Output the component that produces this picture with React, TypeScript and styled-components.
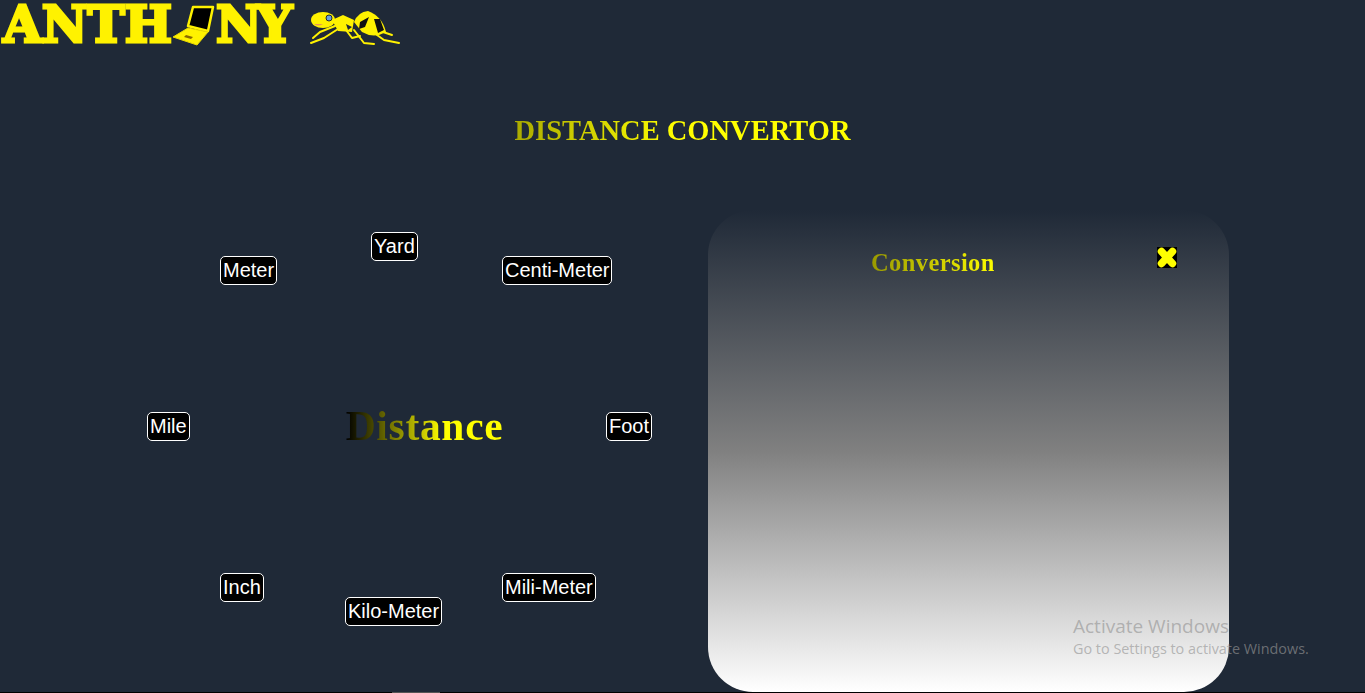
import { createGlobalStyle, styled } from 'styled-components';

const GlobalStyle = createGlobalStyle`
  html, body {
    margin: 0;
    padding: 0;
    height: 100%;
    overflow: hidden;
    background: #1f2937;
  }
`;

const Page = styled.div`
  position: relative;
  display: flex;
  flex-direction: column;
  width: 1365px;
  height: 693px;
  overflow: hidden;
  background: #1f2937;
`;

const Logo = styled.header`
  display: flex;
  align-items: flex-start;
  height: 50px;
  padding-left: 3px;
  box-sizing: border-box;
`;

const LogoWord = styled.span<{ $spacing: number }>`
  font-family: 'DejaVu Serif', serif;
  font-weight: 700;
  font-size: 50px;
  line-height: 50px;
  letter-spacing: ${(p) => p.$spacing}px;
  color: #fff200;
  -webkit-text-stroke: 3px #fff200;
`;

const Laptop = styled.svg`
  flex: none;
  margin-top: 4px;
`;

const Ant = styled.svg`
  flex: none;
  margin: 10px 0 0 23px;
`;

const Title = styled.h1`
  align-self: center;
  margin: 62px 0 0;
  height: 38px;
  font-family: 'Liberation Serif', serif;
  font-weight: 700;
  font-size: 28.5px;
  line-height: 38px;
  color: transparent;
  background: linear-gradient(to right, #aaaa00, #ffff00 48%);
  background-clip: text;
`;

const Main = styled.main`
  display: flex;
  margin-top: 60px;
  height: 482px;
`;

const Dial = styled.section`
  position: relative;
  flex: none;
  display: grid;
  place-items: center;
  width: 708px;
`;

const DialLabel = styled.h2`
  margin: 0 0 50px 141px;
  font-family: 'Liberation Serif', serif;
  font-weight: 700;
  font-size: 41.5px;
  line-height: 46px;
  letter-spacing: 0.7px;
  color: transparent;
  background: linear-gradient(to right, #000000, #ffff00 62%);
  background-clip: text;
`;

const Unit = styled.button<{ $x: number; $y: number }>`
  position: absolute;
  left: ${(p) => p.$x}px;
  top: ${(p) => p.$y}px;
  height: 29px;
  padding: 0 2px;
  border: 1px solid #fff;
  border-radius: 5px;
  background: #000;
  color: #fff;
  font-family: 'Liberation Sans', Arial, sans-serif;
  font-size: 20px;
  line-height: 27px;
`;

const Panel = styled.section`
  flex: none;
  width: 521px;
  border-radius: 45px;
  background: linear-gradient(#1f2937, #808080, #ffffff);
`;

const PanelHead = styled.div`
  display: flex;
  align-items: flex-start;
  padding: 37px 0 0 163px;
`;

const PanelTitle = styled.h3`
  margin: 0;
  width: 286px;
  font-family: 'Liberation Serif', serif;
  font-weight: 700;
  font-size: 24.5px;
  line-height: 32px;
  letter-spacing: 0.4px;
  color: transparent;
  background: linear-gradient(to right, #999900, #ffff00 44%);
  background-clip: text;
`;

const CloseIcon = styled.svg`
  flex: none;
  display: block;
`;

const BottomEdge = styled.div`
  flex: none;
  height: 1px;
  background: #000;
`;

const ScrollThumb = styled.div`
  width: 48px;
  height: 1px;
  margin-left: 392px;
  background: #555;
`;

const Watermark = styled.aside`
  position: absolute;
  left: 1073px;
  top: 613px;
  font-family: 'Open Sans', sans-serif;
  color: rgba(150, 150, 150, 0.65);
  white-space: nowrap;
`;

const WatermarkHead = styled.div`
  font-size: 19px;
  line-height: 26px;
`;

const WatermarkSub = styled.div`
  font-size: 14.4px;
  line-height: 19px;
`;

const units = [
  { name: 'Yard', x: 371, y: 22 },
  { name: 'Meter', x: 220, y: 46 },
  { name: 'Centi-Meter', x: 502, y: 46 },
  { name: 'Mile', x: 147, y: 202 },
  { name: 'Foot', x: 606, y: 202 },
  { name: 'Inch', x: 220, y: 363 },
  { name: 'Mili-Meter', x: 502, y: 363 },
  { name: 'Kilo-Meter', x: 345, y: 387 },
];

export default function App() {
  return (
    <Page>
      <GlobalStyle />
      <Logo>
        <LogoWord $spacing={0}>ANTH</LogoWord>
        <Laptop width="44" height="42" viewBox="0 0 44 42">
          <path d="M21 3 L41 3 L36 27 L16 22 Z" fill="#000" stroke="#fff200" strokeWidth="2.5" strokeLinejoin="round" />
          <path d="M1 33 L16 24 L36 28 L25 41 Z" fill="#fff200" stroke="#e8d800" strokeWidth="1" strokeLinejoin="round" />
          <path d="M14 31 L21 33 L19 35 L12 33 Z" fill="#8a6a00" />
        </Laptop>
        <LogoWord $spacing={-5}>NY</LogoWord>
        <Ant width="90" height="37" viewBox="0 0 90 37">
          <g fill="none" stroke="#fff200" strokeWidth="2" strokeLinecap="round" strokeLinejoin="round">
            <path d="M25 16 L10 22 L3 28" />
            <path d="M28 19 L14 28 L1 33" />
            <path d="M36 20 L42 28 L50 26" />
            <path d="M44 20 L54 33 L64 34" />
            <path d="M60 20 L74 30 L89 33" />
            <path d="M70 21 L82 25" />
          </g>
          <ellipse cx="13" cy="10" rx="12" ry="8" fill="#fff200" />
          <path d="M4 14 Q8 17 13 14" fill="#e89a50" />
          <circle cx="19" cy="8" r="3" fill="#6aa0d8" stroke="#1f2937" strokeWidth="1" />
          <path d="M22 10 L33 5 L44 10 L42 22 L28 21 Z" fill="#fff200" />
          <path d="M36 14 L42 17 L38 20 Z" fill="#1f2937" />
          <path d="M44 12 Q48 2 58 1 Q72 6 76 22 Q64 29 52 22 Z" fill="#fff200" />
          <path d="M50 12 L59 7 L55 17 L49 19 Z M64 9 L70 9 L74 20 L68 23 Z" fill="#111" />
        </Ant>
      </Logo>
      <Title>DISTANCE CONVERTOR</Title>
      <Main>
        <Dial>
          <DialLabel>Distance</DialLabel>
          {units.map((u) => (
            <Unit key={u.name} $x={u.x} $y={u.y}>
              {u.name}
            </Unit>
          ))}
        </Dial>
        <Panel>
          <PanelHead>
            <PanelTitle>Conversion</PanelTitle>
            <CloseIcon width="20" height="21" viewBox="0 0 20 21">
              <rect width="20" height="21" fill="#000" />
              <path d="M4.5 4.5 L15.5 16.5 M15.5 4.5 L4.5 16.5" stroke="#ffff00" strokeWidth="7.5" strokeLinecap="round" />
            </CloseIcon>
          </PanelHead>
        </Panel>
      </Main>
      <BottomEdge>
        <ScrollThumb />
      </BottomEdge>
      <Watermark>
        <WatermarkHead>Activate Windows</WatermarkHead>
        <WatermarkSub>Go to Settings to activate Windows.</WatermarkSub>
      </Watermark>
    </Page>
  );
}
